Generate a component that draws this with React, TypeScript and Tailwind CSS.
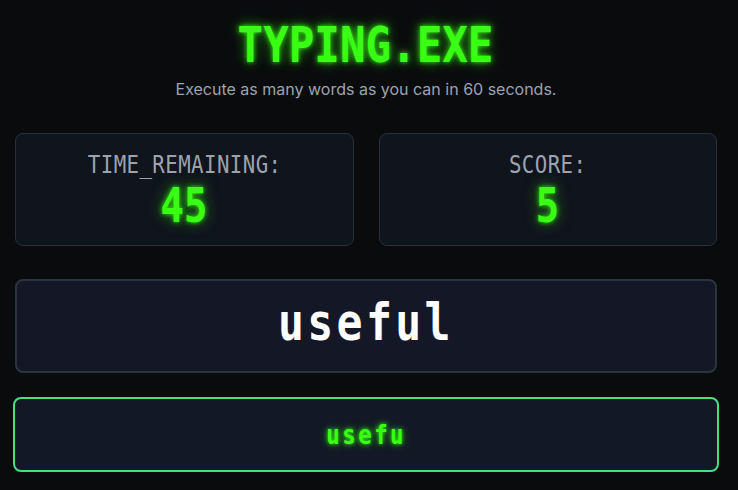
import React from "react";

const mono = "font-['DejaVu_Sans_Mono',monospace]";

export default function App() {
  return (
    <div className="min-h-screen w-full bg-[#0a0b0d] pt-[20px] font-['Inter',sans-serif]">
      <div className="ml-[15px] w-[702px]">
        <div className="flex flex-col items-center">
          <h1
            className={`${mono} inline-block scale-x-[0.85] text-[50px] font-bold leading-none text-[#39ff14] [text-shadow:0_0_6px_rgba(57,255,20,0.9),0_0_14px_rgba(57,255,20,0.6)]`}
          >
            TYPING.EXE
          </h1>
          <p className="mt-[8px] text-[16px] leading-[22px] text-[#9ca3af]">
            Execute as many words as you can in 60 seconds.
          </p>
        </div>

        <div className="mt-[33px] grid grid-cols-2 gap-[25px]">
          <StatCard label="TIME_REMAINING:" value="45" />
          <StatCard label="SCORE:" value="5" />
        </div>

        <div className="mt-[33px] flex h-[94px] items-center justify-center rounded-lg border-2 border-[#2b3240] bg-[#141826] pb-[8px]">
          <span
            className={`${mono} inline-block scale-x-[0.83] text-[52px] font-bold leading-none tracking-[4px] text-white`}
          >
            useful
          </span>
        </div>

        <div className="-mx-[2px] mt-[24px] flex h-[75px] items-center justify-center rounded-lg border-2 border-[#4ade80] bg-[#131826]">
          <span
            className={`${mono} inline-block scale-x-[0.83] text-[27px] font-bold leading-none tracking-[3px] text-[#39ff14] [text-shadow:0_0_5px_rgba(57,255,20,0.9),0_0_10px_rgba(57,255,20,0.5)]`}
          >
            usefu
          </span>
        </div>
      </div>
    </div>
  );
}

function StatCard({ label, value }: { label: string; value: string }) {
  return (
    <div className="flex h-[113px] flex-col items-center rounded-lg border border-[#2a303a] bg-[#10141c] pt-[18px]">
      <span
        className={`${mono} inline-block scale-x-[0.83] text-[25px] leading-none tracking-[0.5px] text-[#9ca3af]`}
      >
        {label}
      </span>
      <span
        className={`${mono} mt-[4px] inline-block scale-x-[0.81] text-[48px] font-bold leading-none text-[#39ff14] [text-shadow:0_0_6px_rgba(57,255,20,0.9),0_0_16px_rgba(57,255,20,0.5)]`}
      >
        {value}
      </span>
    </div>
  );
}
